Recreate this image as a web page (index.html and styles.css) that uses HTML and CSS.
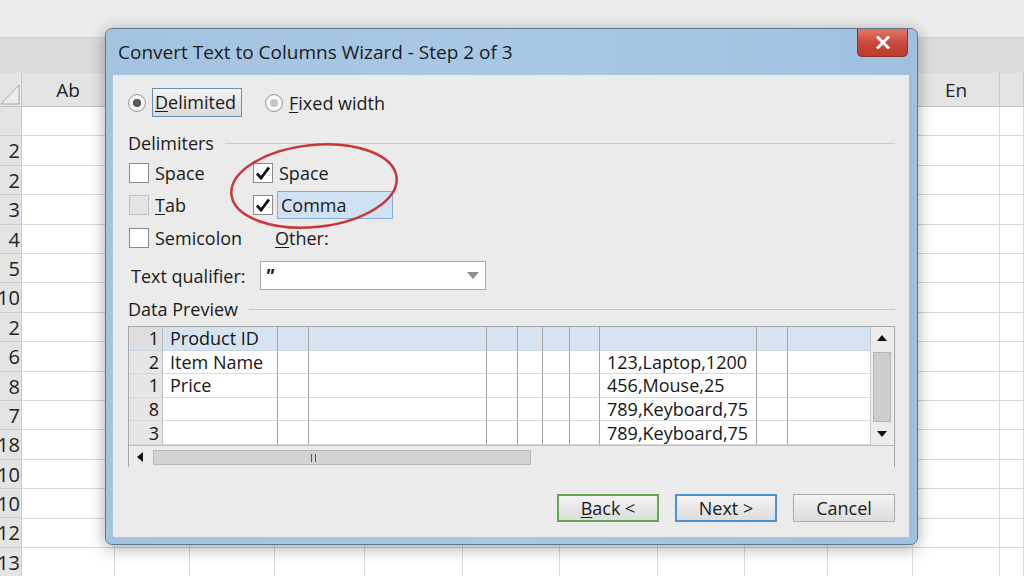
FILE: index.html
```html
<!DOCTYPE html>
<html lang="en">
    <head>
        <meta charset="UTF-8">
        <meta name="viewport" content="width=device-width, initial-scale=1.0">
        <title>Convert Text to Columns Wizard</title>
        <link rel="stylesheet" href="styles.css">
    </head>
    <body>
        <div class="sheet">
            <div class="top-strip"></div>
            <div class="ribbon"></div>
            <div class="col-heads">
                <div class="corner">
                    <svg width="22" height="34" viewBox="0 0 22 34"><path d="M1 31 L19 12 L19 31 Z" fill="#ececec" stroke="#a8a8a8" stroke-width="1"/></svg>
                </div>
                <div class="ch w-a">Ab</div>
                <div class="ch w-b"></div>
                <div class="ch w-c"></div>
                <div class="ch w-d"></div>
                <div class="ch w-e"></div>
                <div class="ch w-f"></div>
                <div class="ch w-g"></div>
                <div class="ch w-h"></div>
                <div class="ch w-i"></div>
                <div class="ch w-j"></div>
                <div class="ch w-k">En</div>
                <div class="ch w-l"></div>
            </div>
            <div class="cells">
                <div class="row-heads">
                    <div></div>
                    <div>2</div>
                    <div>2</div>
                    <div>3</div>
                    <div>4</div>
                    <div>5</div>
                    <div>10</div>
                    <div>2</div>
                    <div>6</div>
                    <div>8</div>
                    <div>7</div>
                    <div>18</div>
                    <div>10</div>
                    <div>10</div>
                    <div>12</div>
                    <div>13</div>
                </div>
                <div class="col w-a"></div>
                <div class="col w-b"></div>
                <div class="col w-c"></div>
                <div class="col w-d"></div>
                <div class="col w-e"></div>
                <div class="col w-f"></div>
                <div class="col w-g"></div>
                <div class="col w-h"></div>
                <div class="col w-i"></div>
                <div class="col w-j"></div>
                <div class="col w-k"></div>
                <div class="col w-l"></div>
            </div>
        </div>

        <div class="dialog">
            <div class="titlebar">
                <span class="title">Convert Text to Columns Wizard - Step 2 of 3</span>
                <button class="close">
                    <svg width="14" height="13" viewBox="0 0 14 13"><path d="M2 1.5 L12 11.5 M12 1.5 L2 11.5" stroke="#fff" stroke-width="3" stroke-linecap="square"/></svg>
                </button>
            </div>
            <div class="pane">
                <div class="type-row">
                    <label class="radio"><span class="dot on"></span><span class="focus-box"><u>D</u>elimited</span></label>
                    <label class="radio"><span class="dot"></span><span><u>F</u>ixed width</span></label>
                </div>

                <div class="group-head delim-head">Delimiters</div>
                <div class="delims">
                    <label class="check"><span class="box"></span><span>Space</span></label>
                    <label class="check"><span class="box"><svg width="18" height="18" viewBox="0 0 18 18"><path d="M3 9.5 L7 14 L15 3.5" fill="none" stroke="#111" stroke-width="2.8"/></svg></span><span>Space</span></label>
                    <label class="check"><span class="box dim"></span><span><u>T</u>ab</span></label>
                    <label class="check"><span class="box"><svg width="18" height="18" viewBox="0 0 18 18"><path d="M3 9.5 L7 14 L15 3.5" fill="none" stroke="#111" stroke-width="2.8"/></svg></span><span class="selected">Comma</span></label>
                    <label class="check"><span class="box"></span><span>Semicolon</span></label>
                    <label class="other"><span><u>O</u>ther:</span></label>
                </div>

                <div class="qualifier">
                    <span class="q-label">Text qualifier:</span>
                    <div class="combo">
                        <span class="quote">"</span>
                        <svg width="12" height="7" viewBox="0 0 12 7"><path d="M0 0 L12 0 L6 7 Z" fill="#8f8f8f"/></svg>
                    </div>
                </div>

                <div class="group-head preview-head">Data Preview</div>
                <div class="preview">
                    <div class="preview-main">
                        <table class="grid">
                            <colgroup>
                                <col class="c-num"><col class="c1"><col class="c2"><col class="c3"><col class="c4"><col class="c5">
                                <col class="c6"><col class="c7"><col class="c8"><col class="c9"><col class="c10">
                            </colgroup>
                            <tr class="first">
                                <td class="num">1</td><td>Product ID</td><td></td><td></td><td></td><td></td><td></td><td></td><td></td><td></td><td></td>
                            </tr>
                            <tr>
                                <td class="num">2</td><td>Item Name</td><td></td><td></td><td></td><td></td><td></td><td></td><td>123,Laptop,1200</td><td></td><td></td>
                            </tr>
                            <tr>
                                <td class="num">1</td><td>Price</td><td></td><td></td><td></td><td></td><td></td><td></td><td>456,Mouse,25</td><td></td><td></td>
                            </tr>
                            <tr>
                                <td class="num">8</td><td></td><td></td><td></td><td></td><td></td><td></td><td></td><td>789,Keyboard,75</td><td></td><td></td>
                            </tr>
                            <tr>
                                <td class="num">3</td><td></td><td></td><td></td><td></td><td></td><td></td><td></td><td>789,Keyboard,75</td><td></td><td></td>
                            </tr>
                        </table>
                        <div class="vscroll">
                            <svg class="arrow-up" width="10" height="6" viewBox="0 0 10 6"><path d="M0 6 L5 0 L10 6 Z" fill="#111"/></svg>
                            <div class="vthumb"></div>
                            <svg class="arrow-down" width="10" height="6" viewBox="0 0 10 6"><path d="M0 0 L10 0 L5 6 Z" fill="#111"/></svg>
                        </div>
                    </div>
                    <div class="hscroll">
                        <svg class="arrow-left" width="6" height="10" viewBox="0 0 6 10"><path d="M6 0 L6 10 L0 5 Z" fill="#111"/></svg>
                        <div class="hthumb"><span class="grip"></span></div>
                    </div>
                </div>

                <div class="buttons">
                    <button class="btn back"><u>B</u>ack &lt;</button>
                    <button class="btn next">Next &gt;</button>
                    <button class="btn">Cancel</button>
                </div>
            </div>
            <svg class="mark" width="190" height="100" viewBox="0 0 190 100">
                <ellipse cx="94" cy="50" rx="83" ry="41" transform="rotate(-6 94 50)" fill="none" stroke="#c9363a" stroke-width="2.5"/>
            </svg>
        </div>
    </body>
</html>
```

FILE: styles.css
```css
body {
    margin: 0;
    width: 1024px;
    height: 576px;
    overflow: hidden;
    position: relative;
    font-family: "Open Sans", "Noto Sans", sans-serif;
    color: #1a1a1a;
    background-color: #fff;
}

/* spreadsheet behind the dialog */
.top-strip {
    height: 37px;
    background-color: #ececec;
}
.ribbon {
    height: 35px;
    background-color: #dcdcdc;
    border-top: 1px solid #d0d0d0;
}
.col-heads {
    display: flex;
    height: 33px;
    border-bottom: 1px solid #c4c4c4;
    background-color: #e4e4e4;
}
.corner {
    width: 22px;
    flex: none;
    border-right: 1px solid #c8c8c8;
    box-sizing: border-box;
}
.ch {
    flex: none;
    box-sizing: border-box;
    border-right: 1px solid #c8c8c8;
    text-align: center;
    font-size: 19px;
    line-height: 34px;
    color: #222;
}
.w-a { width: 93px; }
.w-b { width: 75px; }
.w-c { width: 85px; }
.w-d { width: 90px; }
.w-e { width: 98px; }
.w-f { width: 97px; }
.w-g { width: 98px; }
.w-h { width: 87px; }
.w-i { width: 83px; }
.w-j { width: 85px; }
.w-k { width: 87px; }
.w-l { width: 24px; }

.cells {
    display: flex;
    height: 470px;
    background: repeating-linear-gradient(#fff 0 28.4px, #d8d8d8 28.4px 29.4px);
}
.row-heads {
    width: 22px;
    flex: none;
    overflow: hidden;
    background-color: #e4e4e4;
    border-right: 1px solid #c8c8c8;
    box-sizing: border-box;
}
.row-heads div {
    height: 29.4px;
    box-sizing: border-box;
    border-bottom: 1px solid #cdcdcd;
    display: flex;
    justify-content: flex-end;
    padding-right: 1px;
    font-size: 20px;
    line-height: 29px;
    color: #222;
}
.col {
    flex: none;
    box-sizing: border-box;
    border-right: 1px solid #dadada;
}

/* dialog window */
.dialog {
    position: absolute;
    left: 105px;
    top: 28px;
    width: 813px;
    height: 517px;
    box-sizing: border-box;
    border: 1px solid #5f7893;
    border-radius: 7px;
    background: linear-gradient(to right, #a3c3e1, #a9c8e5 50%, #9fc0df);
    box-shadow: 0 3px 16px rgba(0, 0, 0, 0.35);
    display: flex;
    flex-direction: column;
}
.titlebar {
    height: 46px;
    flex: none;
    display: flex;
    align-items: flex-start;
}
.title {
    padding: 10px 0 0 12px;
    font-size: 19px;
    color: #1b1b1b;
}
.close {
    margin-left: auto;
    margin-right: 9px;
    width: 51px;
    height: 28px;
    padding: 0;
    border: 1px solid #8e3023;
    border-top: none;
    border-radius: 0 0 5px 5px;
    background: linear-gradient(#e07866, #c8463a 55%, #bd3b2e);
    display: flex;
    justify-content: center;
    align-items: center;
}

.pane {
    flex: 1;
    margin: 0 8px 7px 7px;
    padding: 13px 14px 0 15px;
    background-color: #ebebeb;
    font-size: 18px;
    color: #1a1a1a;
}
u {
    text-underline-offset: 2px;
}

.type-row {
    display: flex;
    align-items: center;
    height: 29px;
    gap: 23px;
}
.radio {
    display: flex;
    align-items: center;
    gap: 6px;
}
.dot {
    width: 18px;
    height: 18px;
    box-sizing: border-box;
    border: 1px solid #9c9c9c;
    border-radius: 50%;
    background: radial-gradient(#ffffff 40%, #dedede);
    display: flex;
    justify-content: center;
    align-items: center;
}
.dot::after {
    content: "";
    width: 8px;
    height: 8px;
    border-radius: 50%;
    background-color: #c6c6c6;
}
.dot.on::after {
    background: radial-gradient(#6a6a6a, #3c3c3c);
}
.focus-box {
    height: 29px;
    box-sizing: border-box;
    padding: 0 5px 0 2px;
    border: 1px solid #6b8fb6;
    background: linear-gradient(#f4f4f4, #dadada);
    line-height: 27px;
}

.group-head {
    display: flex;
    align-items: center;
    height: 24px;
}
.group-head::after {
    content: "";
    flex: 1;
    height: 1px;
    margin-left: 11px;
    background-color: #c9c9c9;
}
.delim-head {
    margin-top: 14px;
}
.preview-head {
    margin-top: 7px;
}

.delims {
    display: grid;
    grid-template-columns: 124px auto;
    grid-template-rows: 32px 32px 34px;
    margin-top: 2px;
}
.check {
    display: flex;
    align-items: center;
    gap: 6px;
    padding-left: 1px;
}
.box {
    width: 20px;
    height: 20px;
    box-sizing: border-box;
    border: 1px solid #8a8a8a;
    background-color: #fff;
    display: flex;
    justify-content: center;
    align-items: center;
}
.box.dim {
    border-color: #c2c2c2;
    background-color: #e4e4e4;
}
.selected {
    margin-left: -2px;
    width: 116px;
    height: 28px;
    box-sizing: border-box;
    padding-left: 3px;
    border: 1px solid #86acd3;
    background-color: #cfe1f4;
    line-height: 26px;
}
.other {
    display: flex;
    align-items: center;
    padding-left: 23px;
}

.qualifier {
    display: flex;
    align-items: center;
    height: 29px;
    margin-top: 6px;
}
.q-label {
    width: 129px;
    padding-left: 3px;
}
.combo {
    width: 226px;
    height: 29px;
    box-sizing: border-box;
    border: 1px solid #a9a9a9;
    background-color: #fff;
    display: flex;
    align-items: center;
    justify-content: space-between;
    padding: 0 6px 0 4px;
}
.quote {
    font-weight: bold;
    font-style: italic;
    font-size: 20px;
    line-height: 20px;
    align-self: flex-start;
    margin-top: 4px;
}

.preview {
    margin-top: 5px;
    height: 141px;
    box-sizing: border-box;
    border: 1px solid #a7a7a7;
    background-color: #eeeeee;
}
.preview-main {
    display: flex;
    height: 118px;
    border-bottom: 1px solid #bdbdbd;
}
.grid {
    width: 741px;
    table-layout: fixed;
    border-collapse: separate;
    border-spacing: 0;
    background-color: #fff;
}
.c-num { width: 34px; }
.c1 { width: 115px; }
.c2 { width: 31px; }
.c3 { width: 178px; }
.c4 { width: 31px; }
.c5 { width: 25px; }
.c6 { width: 27px; }
.c7 { width: 30px; }
.c8 { width: 157px; }
.c9 { width: 31px; }
.c10 { width: 82px; }
.grid tr {
    height: 23.6px;
}
.grid td {
    padding: 0 0 0 7px;
    border-right: 1px solid #a3a3a3;
    border-bottom: 1px solid #d9d9d9;
    font-size: 18px;
    line-height: 22px;
    white-space: nowrap;
    overflow: hidden;
    color: #161616;
}
.grid td:last-child {
    border-right: none;
}
.grid .first td {
    background-color: #d6e4f2;
    border-bottom-color: #c5d5e6;
}
.grid td.num {
    padding: 0 3px 0 0;
    text-align: right;
    background-color: #e6e6e6;
    border-right-color: #bdbdbd;
}
.grid .first td.num {
    background-color: #dedede;
}

.vscroll {
    width: 23px;
    flex: none;
    position: relative;
    background-color: #ececec;
    border-left: 1px solid #c9c9c9;
    box-sizing: border-box;
}
.arrow-up,
.arrow-down {
    position: absolute;
    left: 6px;
}
.arrow-up { top: 8px; }
.arrow-down { bottom: 8px; }
.vthumb {
    position: absolute;
    left: 2px;
    top: 25px;
    width: 18px;
    height: 70px;
    box-sizing: border-box;
    border: 1px solid #b5b5b5;
    background-color: #cdcdcd;
}

.hscroll {
    height: 21px;
    position: relative;
    background-color: #ececec;
}
.arrow-left {
    position: absolute;
    left: 8px;
    top: 6px;
}
.hthumb {
    position: absolute;
    left: 24px;
    top: 4px;
    width: 378px;
    height: 15px;
    box-sizing: border-box;
    border: 1px solid #b8b8b8;
    background-color: #d3d3d3;
}
.grip {
    position: absolute;
    left: 157px;
    top: 3px;
    width: 3px;
    height: 8px;
    border-left: 1px solid #555;
    border-right: 1px solid #555;
}

.buttons {
    display: flex;
    justify-content: flex-end;
    gap: 16px;
    margin-top: 27px;
}
.btn {
    width: 102px;
    height: 28px;
    box-sizing: border-box;
    border: 1px solid #acacac;
    background: linear-gradient(#f3f3f3, #dddddd);
    font-family: "Open Sans", "Noto Sans", sans-serif;
    font-size: 18px;
    color: #1a1a1a;
    padding: 0;
}
.btn.back {
    border: 2px solid #61a84f;
}
.btn.next {
    border: 2px solid #4c93d3;
}

.mark {
    position: absolute;
    left: 114px;
    top: 107px;
    pointer-events: none;
}
```
